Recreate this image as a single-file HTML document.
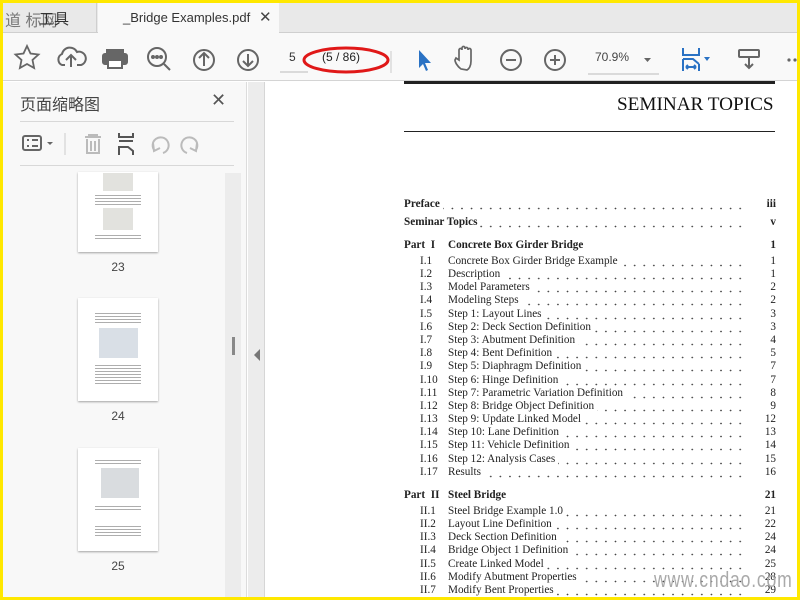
<!DOCTYPE html>
<html><head><meta charset="utf-8">
<style>
*{margin:0;padding:0;box-sizing:border-box}
body{width:800px;height:600px;overflow:hidden;background:#ffe800;position:relative;font-family:"Liberation Sans","Noto Sans CJK SC",sans-serif}
.abs{position:absolute}
#app{position:absolute;left:3px;top:3px;width:794px;height:594px;background:#fff;overflow:hidden}
.tabbar{left:0;top:0;width:794px;height:30px;background:#e9e9e9;border-bottom:1px solid #cfcfcf}
.tb{left:0;top:30px;width:794px;height:48px;background:#f9f9f9;border-bottom:1px solid #d4d4d4}
.side{left:0;top:79px;width:244px;height:515px;background:#f8f8f8;border-right:1px solid #dcdcdc}
.scroll{left:222px;top:170px;width:16px;height:424px;background:#ececec}
.col{left:245px;top:79px;width:17px;height:515px;background:#ececec;border-right:1px solid #d6d6d6}
.doc{left:263px;top:79px;width:531px;height:515px;background:#fff}
svg{position:absolute}
.row{position:absolute;height:13px;left:0;width:794px}
.num{position:absolute;left:417px}
.lead{position:absolute;height:13px;right:52px;background-image:radial-gradient(circle,#444 0.7px,transparent 0.9px);background-size:9.6px 13px;background-position:right 0 top 4px;background-repeat:repeat-x}
.tt{position:absolute;left:0;top:0;background:#fff;padding-right:3px}
.pg{position:absolute;right:21px}
.b{font-weight:bold}
.thumb{position:absolute;left:75px;width:80px;background:#fff;box-shadow:0 1px 2px rgba(0,0,0,.35)}
.lines{position:absolute;left:92px;width:46px;background:repeating-linear-gradient(#777 0 1px,transparent 1px 3px);opacity:.6}
.lbl{position:absolute;left:105px;width:20px;text-align:center;font-size:12px;color:#444}
</style></head><body>
<div id="app">
<div class="abs tabbar"></div>
<div class="abs" style="left:0;top:0;width:94px;height:30px;border-right:1px solid #cfcfcf"></div>
<div class="abs" style="left:2px;top:4px;font-size:16px;color:#777">道 标网</div>
<div class="abs" style="left:36px;top:5px;font-size:15px;color:#333">工具</div>
<div class="abs" style="left:95px;top:0;width:181px;height:31px;background:#f9f9f9"></div>
<div class="abs" style="left:120px;top:7px;font-size:13px;color:#333">_Bridge Examples.pdf</div>
<div class="abs" style="left:256px;top:5px;font-size:15px;color:#444">✕</div>

<div class="abs tb"></div>
<svg width="794" height="48" style="left:0;top:30px" fill="none" stroke="#666" stroke-width="2">
<path d="M24 13 l3.5 7.5 8 1 -6 5.5 1.6 8 -7.1-4 -7.1 4 1.6-8 -6-5.5 8-1z" stroke-width="1.8"/>
<path d="M62 32 h-3 a6 6 0 0 1 0-11 a8 8 0 0 1 15-2 a6 6 0 0 1 4 13 h-4 M68 34 v-12 M63 27 l5-5 5 5"/>
<rect x="104" y="17" width="16" height="4" fill="#666"/><rect x="100" y="21" width="24" height="10" rx="2" fill="#666"/><rect x="105" y="27" width="14" height="8" fill="#fff" stroke="#666"/>
<circle cx="154" cy="24" r="9"/><path d="M161 31 l6 6"/><circle cx="150" cy="24" r="1" fill="#666"/><circle cx="154" cy="24" r="1" fill="#666"/><circle cx="158" cy="24" r="1" fill="#666"/>
<circle cx="201" cy="27" r="10"/><path d="M201 33 v-12 M196 25 l5-5 5 5"/>
<circle cx="245" cy="27" r="10"/><path d="M245 21 v12 M240 28 l5 5 5-5"/>
<path d="M277 39 h28" stroke="#bbb" stroke-width="1"/>
<path d="M388 18 v22" stroke="#ccc" stroke-width="1"/>
<path d="M416 17 l0 18 4-4 3 7 2-1 -3-7 6 0z" fill="#2a72c4" stroke="none"/>
<path d="M458 36 c-4-3 -6-7 -6-9 l1-2 3 2 v-10 a1.5 1.5 0 0 1 3 0 v-2 a1.5 1.5 0 0 1 3 0 v1 a1.5 1.5 0 0 1 3 0 v1 a1.5 1.5 0 0 1 3 0 v11 c0 5 -2 8 -4 9z" stroke-width="1.7"/>
<circle cx="508" cy="27" r="10"/><path d="M503 27 h10"/>
<circle cx="552" cy="27" r="10"/><path d="M547 27 h10 M552 22 v10"/>
<path d="M585 41 h71" stroke="#bbb" stroke-width="1"/>
<path d="M641 25 h7 l-3.5 4z" fill="#666" stroke="none"/>
<path d="M680 15 v7 h16 v-7 M680 26 v12 M696 31 v7 M680 26 h10 l6 5 M683 34 h10 M683 34 l2-2 M683 34 l2 2 M693 34 l-2-2 M693 34 l-2 2" stroke="#2a72c4"/>
<path d="M701 24 h6 l-3 4z" fill="#2a72c4" stroke="none"/>
<rect x="736" y="17" width="20" height="7" rx="1"/><path d="M746 25 v10 M742 31 l4 4 4-4"/>
<circle cx="786" cy="27" r="1.6" fill="#666" stroke="none"/><circle cx="792" cy="27" r="1.6" fill="#666" stroke="none"/>
</svg>
<div class="abs" style="left:286px;top:47px;font-size:12px;color:#333">5</div>
<div class="abs" style="left:319px;top:47px;font-size:12px;color:#222">(5 / 86)</div>
<svg width="100" height="40" style="left:298px;top:36px"><ellipse cx="45" cy="21" rx="42" ry="12" fill="none" stroke="#e01818" stroke-width="3"/></svg>
<div class="abs" style="left:592px;top:47px;font-size:12px;color:#444">70.9%</div>

<div class="abs side"></div>
<div class="abs" style="left:17px;top:88px;font-size:16px;color:#444">页面缩略图</div>
<div class="abs" style="left:208px;top:87px;font-size:18px;color:#555">✕</div>
<div class="abs" style="left:17px;top:118px;width:214px;height:1px;background:#d8d8d8"></div>
<div class="abs" style="left:17px;top:162px;width:214px;height:1px;background:#d8d8d8"></div>
<svg width="230" height="30" style="left:10px;top:126px" fill="none" stroke="#666" stroke-width="2">
<rect x="10" y="7" width="18" height="14" rx="2"/><path d="M14 11 h2 M19 11 h6 M14 17 h2 M19 17 h6"/>
<path d="M34 13 h6 l-3 3z" fill="#666" stroke="none"/>
<path d="M52 4 v22" stroke="#ccc" stroke-width="1"/>
<path d="M72 8 h16 M76 8 v-2 h8 v2 M74 10 v14 h12 v-14 M78 12 v10 M82 12 v10" stroke="#bbb"/>
<path d="M106 4 v4 h14 v-4 M106 12 h14 M106 26 v-8 h9 l5 4 v4" stroke="#555"/>
<path d="M142 22 a8 8 0 1 1 8 2 M140 14 l1 8 6-3" stroke="#bbb"/>
<path d="M182 22 a8 8 0 1 0 -8 2 M184 14 l-1 8 -6-3" stroke="#bbb"/>
</svg>
<div class="abs scroll"></div>
<div class="abs" style="left:229px;top:334px;width:3px;height:18px;background:#888"></div>
<div class="thumb" style="top:169px;height:80px"></div>
<div class="thumb" style="top:295px;height:103px"></div>
<div class="thumb" style="top:445px;height:103px"></div>
<div class="abs" style="left:100px;top:170px;width:30px;height:18px;background:#e2e2de"></div>
<div class="lines" style="top:192px;height:12px"></div>
<div class="abs" style="left:100px;top:205px;width:30px;height:22px;background:#e2e2de"></div>
<div class="lines" style="top:232px;height:6px"></div>
<div class="lines" style="top:310px;height:10px"></div>
<div class="abs" style="left:96px;top:325px;width:39px;height:30px;background:#d9dfe6"></div>
<div class="lines" style="top:362px;height:20px"></div>
<div class="lines" style="top:457px;height:4px"></div>
<div class="abs" style="left:98px;top:465px;width:38px;height:30px;background:#d9dcdf"></div>
<div class="lines" style="top:503px;height:6px"></div>
<div class="lines" style="top:523px;height:12px"></div>
<div class="lbl" style="top:257px">23</div>
<div class="lbl" style="top:406px">24</div>
<div class="lbl" style="top:556px">25</div>

<div class="abs col"></div>
<svg width="10" height="14" style="left:250px;top:345px"><path d="M7 1 L1 7 L7 13z" fill="#777"/></svg>

<div class="abs doc"></div>
<div class="abs" style="left:401px;top:78px;width:371px;height:3px;background:#222"></div>
<div class="abs" style="left:401px;top:128px;width:371px;height:1px;background:#222"></div>
<div class="abs" style="left:614px;top:91px;font-family:'Liberation Serif',serif;font-size:19.2px;color:#111">SEMINAR TOPICS</div>

<div class="abs" style="left:0;top:2px;width:794px;height:600px;font-family:'Liberation Serif',serif;font-size:11.2px;color:#222">
<div class="row" style="top:193px"><div class="lead" style="left:401px"></div><span class="tt b" style="left:401px">Preface</span><span class="pg b">iii</span></div>
<div class="row" style="top:211px"><div class="lead" style="left:401px"></div><span class="tt b" style="left:401px">Seminar Topics</span><span class="pg b">v</span></div>
<div class="row b" style="top:234px"><span class="abs" style="left:401px">Part&nbsp; I</span><span class="abs" style="left:445px">Concrete Box Girder Bridge</span><span class="pg">1</span></div>
<div class="row" style="top:250px"><span class="num">I.1</span><div class="lead" style="left:445px"></div><span class="tt" style="left:445px">Concrete Box Girder Bridge Example</span><span class="pg">1</span></div>
<div class="row" style="top:263px"><span class="num">I.2</span><div class="lead" style="left:445px"></div><span class="tt" style="left:445px">Description</span><span class="pg">1</span></div>
<div class="row" style="top:276px"><span class="num">I.3</span><div class="lead" style="left:445px"></div><span class="tt" style="left:445px">Model Parameters</span><span class="pg">2</span></div>
<div class="row" style="top:289px"><span class="num">I.4</span><div class="lead" style="left:445px"></div><span class="tt" style="left:445px">Modeling Steps</span><span class="pg">2</span></div>
<div class="row" style="top:303px"><span class="num">I.5</span><div class="lead" style="left:445px"></div><span class="tt" style="left:445px">Step 1: Layout Lines</span><span class="pg">3</span></div>
<div class="row" style="top:316px"><span class="num">I.6</span><div class="lead" style="left:445px"></div><span class="tt" style="left:445px">Step 2: Deck Section Definition</span><span class="pg">3</span></div>
<div class="row" style="top:329px"><span class="num">I.7</span><div class="lead" style="left:445px"></div><span class="tt" style="left:445px">Step 3: Abutment Definition</span><span class="pg">4</span></div>
<div class="row" style="top:342px"><span class="num">I.8</span><div class="lead" style="left:445px"></div><span class="tt" style="left:445px">Step 4: Bent Definition</span><span class="pg">5</span></div>
<div class="row" style="top:355px"><span class="num">I.9</span><div class="lead" style="left:445px"></div><span class="tt" style="left:445px">Step 5: Diaphragm Definition</span><span class="pg">7</span></div>
<div class="row" style="top:369px"><span class="num">I.10</span><div class="lead" style="left:445px"></div><span class="tt" style="left:445px">Step 6: Hinge Definition</span><span class="pg">7</span></div>
<div class="row" style="top:382px"><span class="num">I.11</span><div class="lead" style="left:445px"></div><span class="tt" style="left:445px">Step 7: Parametric Variation Definition</span><span class="pg">8</span></div>
<div class="row" style="top:395px"><span class="num">I.12</span><div class="lead" style="left:445px"></div><span class="tt" style="left:445px">Step 8: Bridge Object Definition</span><span class="pg">9</span></div>
<div class="row" style="top:408px"><span class="num">I.13</span><div class="lead" style="left:445px"></div><span class="tt" style="left:445px">Step 9: Update Linked Model</span><span class="pg">12</span></div>
<div class="row" style="top:421px"><span class="num">I.14</span><div class="lead" style="left:445px"></div><span class="tt" style="left:445px">Step 10: Lane Definition</span><span class="pg">13</span></div>
<div class="row" style="top:434px"><span class="num">I.15</span><div class="lead" style="left:445px"></div><span class="tt" style="left:445px">Step 11: Vehicle Definition</span><span class="pg">14</span></div>
<div class="row" style="top:448px"><span class="num">I.16</span><div class="lead" style="left:445px"></div><span class="tt" style="left:445px">Step 12: Analysis Cases</span><span class="pg">15</span></div>
<div class="row" style="top:461px"><span class="num">I.17</span><div class="lead" style="left:445px"></div><span class="tt" style="left:445px">Results</span><span class="pg">16</span></div>
<div class="row b" style="top:484px"><span class="abs" style="left:401px">Part&nbsp; II</span><span class="abs" style="left:445px">Steel Bridge</span><span class="pg">21</span></div>
<div class="row" style="top:500px"><span class="num">II.1</span><div class="lead" style="left:445px"></div><span class="tt" style="left:445px">Steel Bridge Example 1.0</span><span class="pg">21</span></div>
<div class="row" style="top:513px"><span class="num">II.2</span><div class="lead" style="left:445px"></div><span class="tt" style="left:445px">Layout Line Definition</span><span class="pg">22</span></div>
<div class="row" style="top:526px"><span class="num">II.3</span><div class="lead" style="left:445px"></div><span class="tt" style="left:445px">Deck Section Definition</span><span class="pg">24</span></div>
<div class="row" style="top:539px"><span class="num">II.4</span><div class="lead" style="left:445px"></div><span class="tt" style="left:445px">Bridge Object 1 Definition</span><span class="pg">24</span></div>
<div class="row" style="top:553px"><span class="num">II.5</span><div class="lead" style="left:445px"></div><span class="tt" style="left:445px">Create Linked Model</span><span class="pg">25</span></div>
<div class="row" style="top:566px"><span class="num">II.6</span><div class="lead" style="left:445px"></div><span class="tt" style="left:445px">Modify Abutment Properties</span><span class="pg">28</span></div>
<div class="row" style="top:579px"><span class="num">II.7</span><div class="lead" style="left:445px"></div><span class="tt" style="left:445px">Modify Bent Properties</span><span class="pg">29</span></div>
</div>
<div class="abs" style="left:651px;top:564px;font-family:'Liberation Sans Narrow','Liberation Sans',sans-serif;font-size:22px;color:#aaa;transform:scaleX(0.8);transform-origin:left;letter-spacing:1px">www.cndao.com</div>
</div>
</body></html>
